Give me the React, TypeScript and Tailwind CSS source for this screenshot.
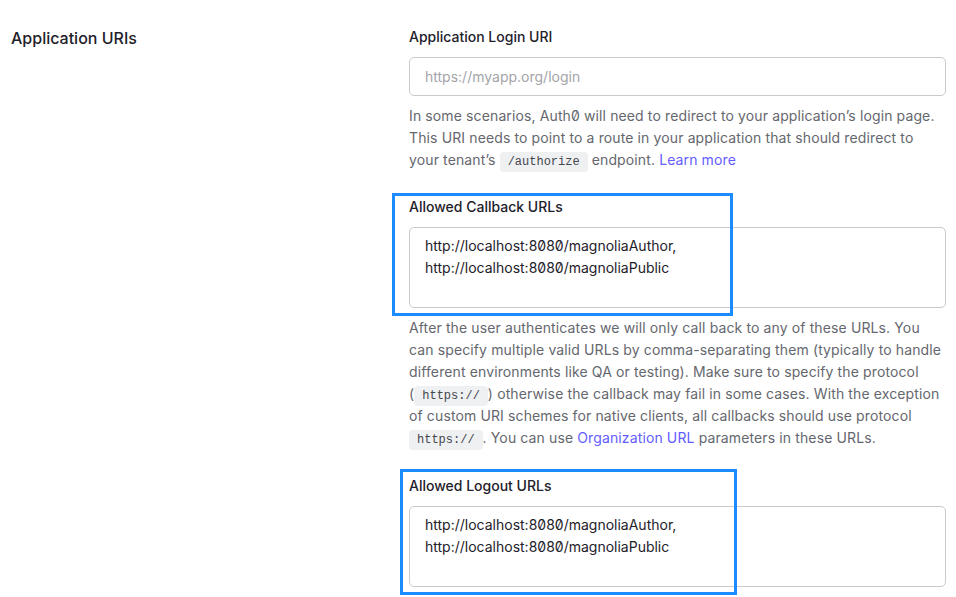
import React from 'react';

const urls = 'http://localhost:8080/magnoliaAuthor,\nhttp://localhost:8080/magnoliaPublic';

const Code: React.FC<{ children: React.ReactNode }> = ({ children }) => (
  <code className="rounded-[4px] bg-[#eff0f2] px-2 py-[3px] font-['Liberation_Mono',monospace] text-[12px] leading-none tracking-normal text-[#44464d]">
    {children}
  </code>
);

const Field: React.FC<{ label: string; children: React.ReactNode; className?: string }> = ({ label, children, className }) => (
  <div className={className}>
    <label className="block text-[14px] leading-5 font-medium text-[#1e212a] mb-[10px]">{label}</label>
    {children}
  </div>
);

const Help: React.FC<{ children: React.ReactNode }> = ({ children }) => (
  <p className="mt-[9px] text-[14px] leading-[22px] tracking-[0.12px] text-[#65676e]">{children}</p>
);

const App: React.FC = () => {
  return (
    <div className="relative min-h-screen bg-white font-['Inter',sans-serif] [font-feature-settings:'zero'] flex pl-[11px] pr-[10px] pt-[27px]">
      {/* Section title */}
      <div className="w-[398px] shrink-0">
        <h2 className="text-[16px] leading-[22px] font-medium text-[#1e212a]">Application URIs</h2>
      </div>

      {/* Fields */}
      <div className="flex-1">
        <Field label="Application Login URI">
          <input
            type="text"
            placeholder="https://myapp.org/login"
            className="w-full h-[39px] rounded-[5px] border border-[#c9cace] px-[15px] text-[14px] text-[#1e212a] placeholder:text-[#a3a4a9] outline-none"
          />
          <Help>
            In some scenarios, Auth0 will need to redirect to your application’s login page. This URI needs to point to a route in your application that should redirect to your tenant’s <Code>/authorize</Code> endpoint. <a className="text-[#635dff]">Learn more</a>
          </Help>
        </Field>

        <Field label="Allowed Callback URLs" className="mt-[26px]">
          <textarea
            readOnly
            value={urls}
            className="block w-full h-[81px] resize-none rounded-[5px] border border-[#c9cace] px-[15px] pt-[7px] text-[14px] leading-[22px] text-[#1e212a] outline-none"
          />
          <Help>
            After the user authenticates we will only call back to any of these URLs. You can specify multiple valid URLs by comma-separating them (typically to handle different environments like QA or testing). Make sure to specify the protocol (<Code>https://</Code>) otherwise the callback may fail in some cases. With the exception of custom URI schemes for native clients, all callbacks should use protocol <Code>https://</Code>. You can use <a className="text-[#635dff]">Organization URL</a> parameters in these URLs.
          </Help>
        </Field>

        <Field label="Allowed Logout URLs" className="mt-[27px]">
          <textarea
            readOnly
            value={urls}
            className="block w-full h-[81px] resize-none rounded-[5px] border border-[#c9cace] px-[15px] pt-[7px] text-[14px] leading-[22px] text-[#1e212a] outline-none"
          />
        </Field>
      </div>

      {/* Highlight annotations */}
      <div className="absolute left-[392px] top-[193px] w-[341px] h-[123px] border-[3px] border-[#1a8cff] pointer-events-none" />
      <div className="absolute left-[400px] top-[469px] w-[337px] h-[126px] border-[3px] border-[#1a8cff] pointer-events-none" />
    </div>
  );
};

export default App;
